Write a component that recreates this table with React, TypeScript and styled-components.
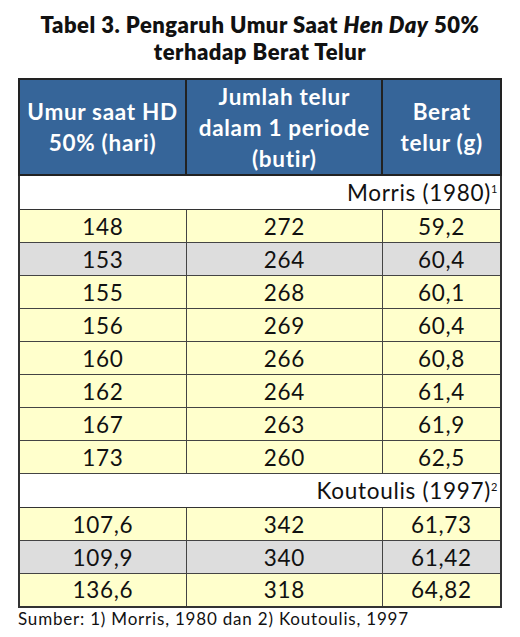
import styled, { createGlobalStyle } from 'styled-components'

const GlobalStyle = createGlobalStyle`
    html, body {
        margin: 0;
        padding: 0;
        background: #ffffff;
    }
`

const Page = styled.div`
    width: 520px;
    padding: 11px 18px 0 18px;
    box-sizing: border-box;
`

const Title = styled.h1`
    margin: 0 0 13px 0;
    font-family: "Lato", "Liberation Sans", sans-serif;
    font-weight: 800;
    font-size: 22px;
    line-height: 27px;
    text-align: center;
    color: #111111;
    letter-spacing: 0.5px;
`

const Table = styled.table`
    width: 484px;
    border-collapse: collapse;
    font-family: "Lato", "Liberation Sans", sans-serif;
    font-size: 22.5px;
    letter-spacing: 0.7px;
    color: #111111;
    border: 2px solid #333333;
`

const HeadCell = styled.th<{ w: number }>`
    width: ${p => p.w}px;
    height: 96px;
    padding: 0 2px;
    box-sizing: border-box;
    background: #366599;
    color: #ffffff;
    font-weight: 700;
    line-height: 31px;
    text-align: center;
    border: 2px solid #222222;
`

const SourceCell = styled.td`
    height: 33px;
    padding: 0 2px 0 0;
    background: #ffffff;
    text-align: right;
    border: 1px solid #333333;
    & sup {
        font-size: 11px;
        vertical-align: 8px;
        line-height: 0;
    }
`

const Cell = styled.td<{ shade: 'yellow' | 'grey' }>`
    height: 33px;
    padding: 0;
    box-sizing: border-box;
    text-align: center;
    background: ${p => (p.shade === 'yellow' ? '#ffffcc' : '#dddddd')};
    border: 1px solid #444444;
`

const Note = styled.p`
    margin: 0;
    font-family: "Lato", "Liberation Sans", sans-serif;
    font-size: 17px;
    letter-spacing: 0.8px;
    line-height: 22px;
    color: #111111;
`

// only the second row of each group is grey in the original
const morris = [
    ['148', '272', '59,2'],
    ['153', '264', '60,4'],
    ['155', '268', '60,1'],
    ['156', '269', '60,4'],
    ['160', '266', '60,8'],
    ['162', '264', '61,4'],
    ['167', '263', '61,9'],
    ['173', '260', '62,5'],
]

const koutoulis = [
    ['107,6', '342', '61,73'],
    ['109,9', '340', '61,42'],
    ['136,6', '318', '64,82'],
]

const renderRows = (rows: string[][]) =>
    rows.map((row, i) => (
        <tr key={row[0]}>
            {row.map((v, j) => (
                <Cell key={j} shade={i === 1 ? 'grey' : 'yellow'}>
                    {v}
                </Cell>
            ))}
        </tr>
    ))

const App = () => {
    return (
        <Page>
            <GlobalStyle />
            <Title>
                Tabel 3. Pengaruh Umur Saat <i>Hen Day</i> 50%
                <br />
                terhadap Berat Telur
            </Title>
            <Table>
                <thead>
                    <tr>
                        <HeadCell w={168}>Umur saat HD<br />50% (hari)</HeadCell>
                        <HeadCell w={197}>Jumlah telur<br />dalam 1 periode<br />(butir)</HeadCell>
                        <HeadCell w={119}>Berat<br />telur (g)</HeadCell>
                    </tr>
                </thead>
                <tbody>
                    <tr>
                        <SourceCell colSpan={3}>
                            Morris (1980)<sup>1</sup>
                        </SourceCell>
                    </tr>
                    {renderRows(morris)}
                    <tr>
                        <SourceCell colSpan={3}>
                            Koutoulis (1997)<sup>2</sup>
                        </SourceCell>
                    </tr>
                    {renderRows(koutoulis)}
                </tbody>
            </Table>
            <Note>Sumber: 1) Morris, 1980 dan 2) Koutoulis, 1997</Note>
        </Page>
    )
}

export default App
